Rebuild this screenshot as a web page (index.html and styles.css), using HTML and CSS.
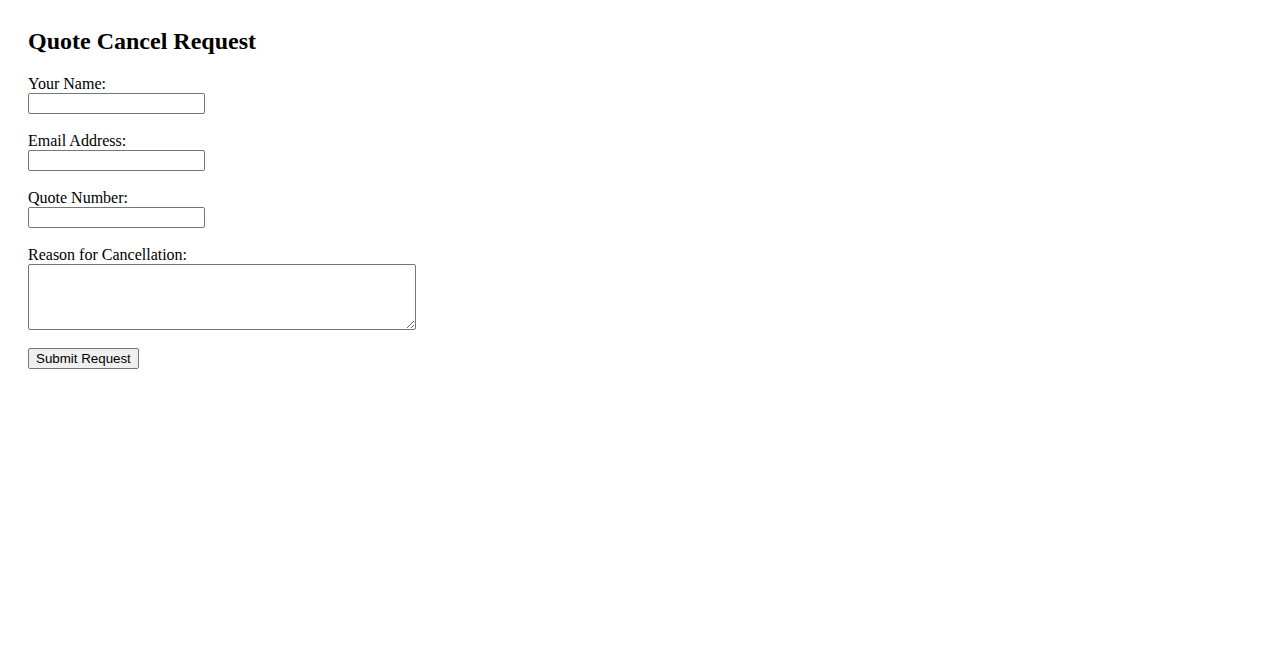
FILE: index.html
```html
<!DOCTYPE html>
<html>
<head>
  <title>Quote Cancel Request</title>
  <link rel="stylesheet" href="styles.css">
</head>
<body>
  <h2>Quote Cancel Request</h2>
  <form action="/" method="post">
    <div class="field">
      <label for="name">Your Name:</label>
      <input type="text" id="name" name="name" class="text-input">
    </div>

    <div class="field">
      <label for="email">Email Address:</label>
      <input type="email" id="email" name="email" class="text-input">
    </div>

    <div class="field">
      <label for="quote">Quote Number:</label>
      <input type="text" id="quote" name="quote" class="text-input">
    </div>

    <div class="field">
      <label for="reason">Reason for Cancellation:</label>
      <textarea id="reason" name="reason" class="reason-box"></textarea>
    </div>

    <button type="submit" class="submit-button">Submit Request</button>
  </form>
</body>
</html>
```

FILE: styles.css
```css
body {
  font-family: "Liberation Serif", "Times New Roman", serif;
  font-size: 16px;
  color: #000;
  background: #fff;
  margin: 0;
  padding: 28px 28px;
}

h2 {
  font-size: 24px;
  font-weight: bold;
  line-height: 27px;
  margin: 0 0 20px;
}

.field {
  margin-bottom: 18px;
}

label {
  display: block;
  line-height: 18px;
}

.text-input,
.reason-box {
  display: block;
  box-sizing: border-box;
  margin: 0;
  border: 1px solid #767676;
  border-radius: 2px;
  background: #fff;
  font-family: "Liberation Sans", Arial, sans-serif;
  font-size: 13.33px;
}

.text-input {
  width: 177px;
  height: 21px;
  padding: 1px 2px;
}

.reason-box {
  width: 388px;
  height: 66px;
  padding: 2px;
  font-family: "Liberation Mono", monospace;
}

.submit-button {
  display: block;
  box-sizing: border-box;
  height: 21px;
  margin: 0;
  padding: 1px 7px;
  border: 1px solid #767676;
  border-radius: 2px;
  background: #efefef;
  color: #000;
  font-family: "Liberation Sans", Arial, sans-serif;
  font-size: 13.33px;
  cursor: pointer;
}
```
